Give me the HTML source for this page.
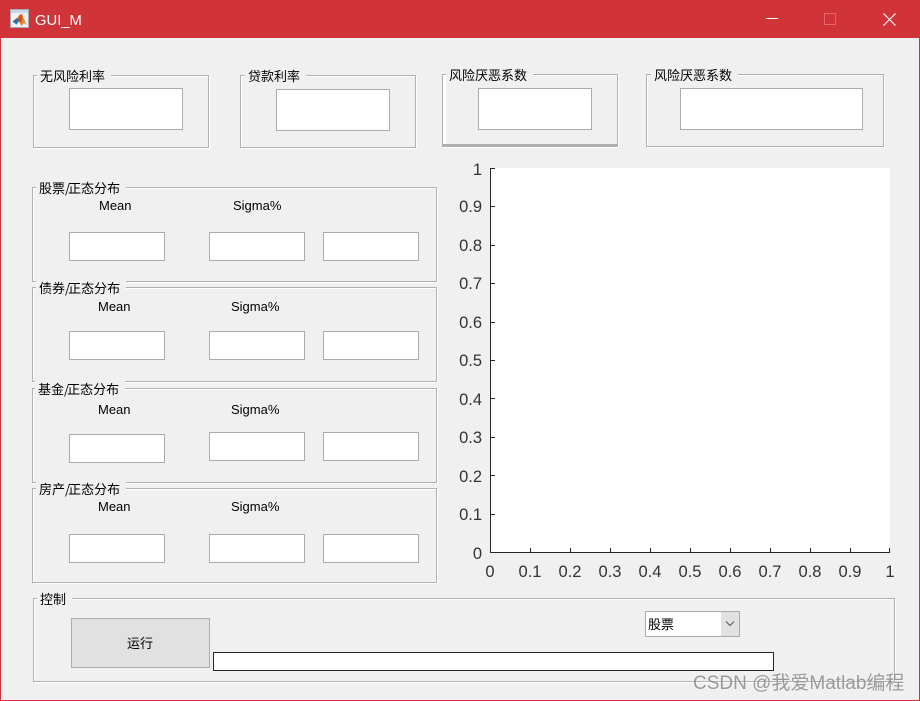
<!DOCTYPE html>
<html lang="zh">
<head>
<meta charset="utf-8">
<title>GUI_M</title>
<style>
html,body{margin:0;padding:0;width:920px;height:701px;overflow:hidden;background:#f0f0f0}
#w{position:relative;width:920px;height:701px;background:#f0f0f0;overflow:hidden;font-family:"Liberation Sans","WenQuanYi Zen Hei",sans-serif;color:#000}
.f{position:absolute;box-sizing:border-box;border:1px solid #b0b0b0;box-shadow:inset 1px 1px 0 #fff,1px 1px 0 #fff}
.i{position:absolute;box-sizing:border-box;background:#fff;border:1px solid #ababab}
.l{position:absolute;height:16px;line-height:16px;font-size:13px;background:#f0f0f0;white-space:nowrap;font-family:"WenQuanYi Zen Hei","Noto Sans CJK SC",sans-serif;padding:0 6px 0 3px}
.l span{letter-spacing:-2px}
.t{position:absolute;height:16px;line-height:16px;font-size:13px;white-space:nowrap}
.c{font-family:"WenQuanYi Zen Hei","Noto Sans CJK SC",sans-serif}
svg{position:absolute;left:0;top:0}
</style>
</head>
<body>
<div id="w">
<!-- window frame -->
<div style="position:absolute;left:0;top:0;width:920px;height:38px;background:#d13438"></div>
<div style="position:absolute;left:0;top:0;width:1px;height:701px;background:#d13438"></div>
<div style="position:absolute;left:919px;top:0;width:1px;height:701px;background:#d13438"></div>
<div style="position:absolute;left:0;top:700px;width:920px;height:1px;background:#d13438"></div>
<div style="position:absolute;left:35px;top:12px;height:18px;line-height:18px;font-size:14.8px;color:#fff;white-space:nowrap">GUI_M</div>

<!-- top panels -->
<div class="f" style="left:33px;top:75px;width:176px;height:73px"></div>
<div class="l" style="left:37px;top:68px">无风险利率</div>
<div class="i" style="left:69px;top:88px;width:114px;height:42px"></div>

<div class="f" style="left:240px;top:75px;width:176px;height:73px"></div>
<div class="l" style="left:245px;top:68px">贷款利率</div>
<div class="i" style="left:276px;top:89px;width:114px;height:42px"></div>

<div class="f" style="left:442px;top:74px;width:176px;height:73px;border-bottom:3px solid #b0b0b0;box-shadow:inset 3px 1px 0 #fff,1px 1px 0 #fff"></div>
<div class="l" style="left:446px;top:67px">风险厌恶系数</div>
<div class="i" style="left:478px;top:88px;width:114px;height:42px"></div>

<div class="f" style="left:646px;top:74px;width:238px;height:73px"></div>
<div class="l" style="left:651px;top:67px">风险厌恶系数</div>
<div class="i" style="left:680px;top:88px;width:183px;height:42px"></div>

<!-- row 1 -->
<div class="f" style="left:32px;top:187px;width:405px;height:95px"></div>
<div class="l" style="left:36px;top:180px">股票<span>/</span>正态分布</div>
<div class="t" style="left:99px;top:198px">Mean</div>
<div class="t" style="left:233px;top:198px">Sigma%</div>
<div class="i" style="left:69px;top:232px;width:96px;height:29px"></div>
<div class="i" style="left:209px;top:232px;width:96px;height:29px"></div>
<div class="i" style="left:323px;top:232px;width:96px;height:29px"></div>

<!-- row 2 -->
<div class="f" style="left:32px;top:287px;width:405px;height:95px"></div>
<div class="l" style="left:36px;top:280px">债券<span>/</span>正态分布</div>
<div class="t" style="left:98px;top:299px">Mean</div>
<div class="t" style="left:231px;top:299px">Sigma%</div>
<div class="i" style="left:69px;top:331px;width:96px;height:29px"></div>
<div class="i" style="left:209px;top:331px;width:96px;height:29px"></div>
<div class="i" style="left:323px;top:331px;width:96px;height:29px"></div>

<!-- row 3 -->
<div class="f" style="left:32px;top:388px;width:405px;height:95px"></div>
<div class="l" style="left:35px;top:381px">基金<span>/</span>正态分布</div>
<div class="t" style="left:98px;top:402px">Mean</div>
<div class="t" style="left:231px;top:402px">Sigma%</div>
<div class="i" style="left:69px;top:434px;width:96px;height:29px"></div>
<div class="i" style="left:209px;top:432px;width:96px;height:29px"></div>
<div class="i" style="left:323px;top:432px;width:96px;height:29px"></div>

<!-- row 4 -->
<div class="f" style="left:32px;top:488px;width:405px;height:95px"></div>
<div class="l" style="left:36px;top:481px">房产<span>/</span>正态分布</div>
<div class="t" style="left:98px;top:499px">Mean</div>
<div class="t" style="left:231px;top:499px">Sigma%</div>
<div class="i" style="left:69px;top:534px;width:96px;height:29px"></div>
<div class="i" style="left:209px;top:534px;width:96px;height:29px"></div>
<div class="i" style="left:323px;top:534px;width:96px;height:29px"></div>

<!-- control panel -->
<div class="f" style="left:33px;top:598px;width:862px;height:84px"></div>
<div class="l" style="left:37px;top:591px">控制</div>
<div style="position:absolute;box-sizing:border-box;left:71px;top:618px;width:139px;height:50px;background:#e1e1e1;border:1px solid #adadad"></div>
<div class="t c" style="left:127px;top:635px">运行</div>
<div style="position:absolute;box-sizing:border-box;left:213px;top:652px;width:561px;height:19px;background:#fff;border:1px solid #262626"></div>
<div class="i" style="left:645px;top:611px;width:95px;height:26px"></div>
<div style="position:absolute;left:721px;top:612px;width:18px;height:24px;background:#e1e1e1"></div>
<div class="t c" style="left:648px;top:616px">股票</div>

<svg width="920" height="701" viewBox="0 0 920 701">
  <!-- window buttons -->
  <g shape-rendering="crispEdges">
    <rect x="766" y="18" width="12" height="1" fill="#fff"/>
    <rect x="824.5" y="13.5" width="11" height="11" fill="none" stroke="#e4686b"/>
  </g>
  <path d="M883.5 13.5L895.5 25.5M895.5 13.5L883.5 25.5" stroke="#fff" stroke-width="1.1" fill="none"/>
  <!-- MATLAB icon -->
  <rect x="10.5" y="9.5" width="18" height="18" fill="#f1f1f3" stroke="#a9a9b2"/>
  <rect x="11" y="10" width="17" height="3" fill="#c9d7ea"/>
  <path d="M12.5 21.5L17 18L20 14.5L22 14L26.5 25L24 23L21.5 26L19 21.5Z" fill="#e8842a"/>
  <path d="M12.5 21.5L17 18L19.5 20.5L16.5 24.5Z" fill="#2f6fa8"/>
  <path d="M20 14.5L21.5 14.5L22 20L20.5 23L18 19.5Z" fill="#d9461f"/>
  <!-- dropdown arrow -->
  <path d="M726 621.5L730 625.5L734 621.5" fill="none" stroke="#555" stroke-width="1"/>
  <!-- axes -->
  <rect x="490" y="168" width="400" height="384" fill="#fff"/>
  <g shape-rendering="crispEdges" stroke="#262626" stroke-width="1" fill="none">
    <path d="M490.5 168V552.5H890"/>
    <path d="M491 168.5h4M491 206.5h4M491 245.5h4M491 283.5h4M491 322.5h4M491 360.5h4M491 398.5h4M491 437.5h4M491 475.5h4M491 514.5h4"/>
    <path d="M530.5 552v-4M570.5 552v-4M610.5 552v-4M650.5 552v-4M690.5 552v-4M730.5 552v-4M770.5 552v-4M810.5 552v-4M850.5 552v-4M889.5 552v-4"/>
  </g>
  <g font-family="Liberation Sans, sans-serif" font-size="16.5" fill="#333" text-anchor="end">
    <text x="482" y="175">1</text>
    <text x="482" y="212">0.9</text>
    <text x="482" y="251">0.8</text>
    <text x="482" y="289">0.7</text>
    <text x="482" y="328">0.6</text>
    <text x="482" y="366">0.5</text>
    <text x="482" y="405">0.4</text>
    <text x="482" y="443">0.3</text>
    <text x="482" y="482">0.2</text>
    <text x="482" y="520">0.1</text>
    <text x="482" y="559">0</text>
  </g>
  <g font-family="Liberation Sans, sans-serif" font-size="16.5" fill="#333" text-anchor="middle">
    <text x="490" y="577">0</text>
    <text x="530" y="577">0.1</text>
    <text x="570" y="577">0.2</text>
    <text x="610" y="577">0.3</text>
    <text x="650" y="577">0.4</text>
    <text x="690" y="577">0.5</text>
    <text x="730" y="577">0.6</text>
    <text x="770" y="577">0.7</text>
    <text x="810" y="577">0.8</text>
    <text x="850" y="577">0.9</text>
    <text x="890" y="577">1</text>
  </g>
</svg>

<!-- watermark -->
<div style="position:absolute;left:693px;top:673px;height:22px;line-height:22px;font-size:19px;color:#8a8a8a;opacity:.85;white-space:nowrap;font-family:'Liberation Sans','Noto Sans CJK SC',sans-serif;text-shadow:0 0 1px #fff">CSDN @我爱Matlab编程</div>
</div>
</body>
</html>
